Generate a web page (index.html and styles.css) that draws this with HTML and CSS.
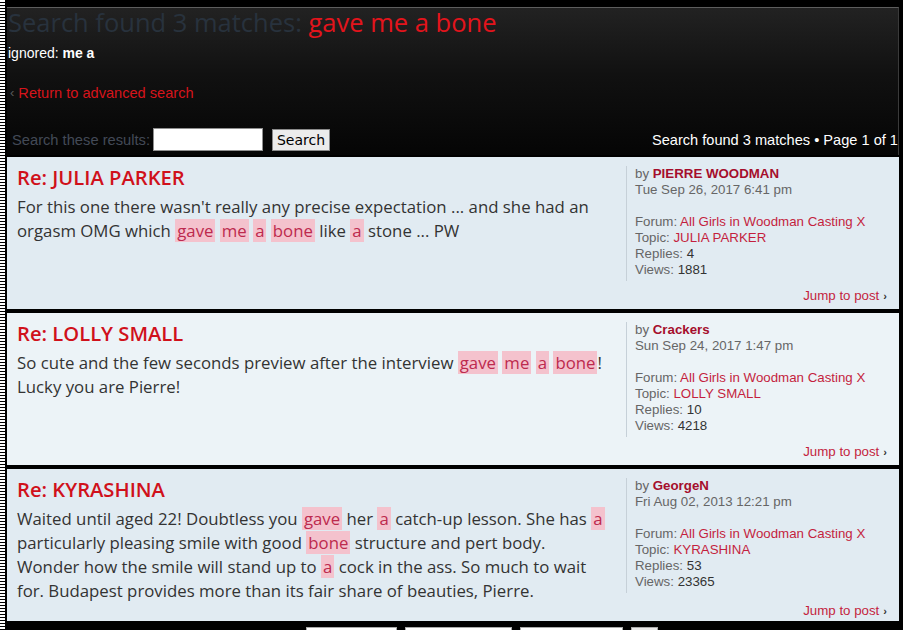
FILE: index.html
```html
<!DOCTYPE html>
<html lang="en">
<head>
<meta charset="utf-8">
<title>Search results</title>
<link rel="stylesheet" href="styles.css">
</head>
<body>
<div class="page">
  <div class="edge"></div>
  <div class="wrap">
    <header class="head">
      <h2 class="title">Search found 3 matches: <span class="kw">gave me a bone</span></h2>
      <p class="ignored">ignored: <strong>me a</strong></p>
      <p class="back"><span class="arrow">‹</span><a class="backlink">Return to advanced search</a></p>
      <div class="searchbar">
        <form class="sform">
          <label class="slabel">Search these results:</label>
          <input class="sinput" type="text">
          <button class="sbtn" type="button">Search</button>
        </form>
        <div class="pag">Search found 3 matches • Page 1 of 1</div>
      </div>
    </header>

    <article class="card bg2">
      <div class="main">
        <div class="post">
          <h3 class="ptitle">Re: JULIA PARKER</h3>
          <div class="content">For this one there wasn't really any precise expectation ... and she had an orgasm OMG which <span class="hl">gave</span> <span class="hl">me</span> <span class="hl">a</span> <span class="hl">bone</span> like <span class="hl">a</span> stone ... PW</div>
        </div>
        <dl class="profile">
          <dt>by <a class="author">PIERRE WOODMAN</a></dt>
          <dd>Tue Sep 26, 2017 6:41 pm</dd>
          <dd class="gap">Forum: <a class="lnk">All Girls in Woodman Casting X</a></dd>
          <dd>Topic: <a class="lnk">JULIA PARKER</a></dd>
          <dd>Replies: <strong class="val">4</strong></dd>
          <dd>Views: <strong class="val">1881</strong></dd>
        </dl>
      </div>
      <div class="jump"><a class="lnk">Jump to post</a><span class="chev">›</span></div>
    </article>

    <article class="card bg1">
      <div class="main">
        <div class="post">
          <h3 class="ptitle">Re: LOLLY SMALL</h3>
          <div class="content">So cute and the few seconds preview after the interview <span class="hl">gave</span> <span class="hl">me</span> <span class="hl">a</span> <span class="hl">bone</span>! Lucky you are Pierre!</div>
        </div>
        <dl class="profile">
          <dt>by <a class="author">Crackers</a></dt>
          <dd>Sun Sep 24, 2017 1:47 pm</dd>
          <dd class="gap">Forum: <a class="lnk">All Girls in Woodman Casting X</a></dd>
          <dd>Topic: <a class="lnk">LOLLY SMALL</a></dd>
          <dd>Replies: <strong class="val">10</strong></dd>
          <dd>Views: <strong class="val">4218</strong></dd>
        </dl>
      </div>
      <div class="jump"><a class="lnk">Jump to post</a><span class="chev">›</span></div>
    </article>

    <article class="card bg2">
      <div class="main">
        <div class="post">
          <h3 class="ptitle">Re: KYRASHINA</h3>
          <div class="content">Waited until aged 22! Doubtless you <span class="hl">gave</span> her <span class="hl">a</span> catch-up lesson. She has <span class="hl">a</span> particularly pleasing smile with good <span class="hl">bone</span> structure and pert body. Wonder how the smile will stand up to <span class="hl">a</span> cock in the ass. So much to wait for. Budapest provides more than its fair share of beauties, Pierre.</div>
        </div>
        <dl class="profile">
          <dt>by <a class="author">GeorgeN</a></dt>
          <dd>Fri Aug 02, 2013 12:21 pm</dd>
          <dd class="gap">Forum: <a class="lnk">All Girls in Woodman Casting X</a></dd>
          <dd>Topic: <a class="lnk">KYRASHINA</a></dd>
          <dd>Replies: <strong class="val">53</strong></dd>
          <dd>Views: <strong class="val">23365</strong></dd>
        </dl>
      </div>
      <div class="jump"><a class="lnk">Jump to post</a><span class="chev">›</span></div>
    </article>

    <div class="bottom">
      <span class="box b1"></span>
      <span class="box b2"></span>
      <span class="box b3"></span>
      <span class="box b4"></span>
    </div>
  </div>
</div>
</body>
</html>
```

FILE: styles.css
```css
html, body {
  margin: 0;
  padding: 0;
  background: #000;
  height: 630px;
  overflow: hidden;
}
.page {
  display: flex;
  align-items: stretch;
  min-height: 630px;
}
.edge {
  width: 5px;
  flex: none;
  background: repeating-linear-gradient(to bottom, #fff 0 2px, #000 2px 3px);
  border-right: 2px solid #000;
}
.wrap {
  width: 892px;
  flex: none;
  padding-top: 7px;
}
.head {
  border-top: 1px solid #5e5e5e;
  border-right: 1px solid #3a3a3a;
  background: linear-gradient(to bottom, #222 0%, #111 45%, #050505 100%);
  height: 148px;
  box-sizing: border-box;
  padding: 0 0 0 1px;
  font-family: "Liberation Sans", Arial, sans-serif;
  font-size: 14px;
  color: #fff;
  overflow: hidden;
}
.title {
  margin: -2px 0 0 0;
  font-family: "Open Sans", sans-serif;
  font-weight: 400;
  font-size: 25.5px;
  line-height: 32px;
  color: #28323d;
  white-space: nowrap;
}
.kw {
  color: #e3141c;
}
.ignored {
  margin: 6px 0 0 0;
  line-height: 18px;
}
.back {
  margin: 22px 0 0 2px;
  line-height: 18px;
  font-size: 14.6px;
  display: flex;
  gap: 4px;
}
.arrow {
  color: #5a5a5a;
  font-size: 13px;
}
.backlink {
  color: #d7141b;
}
.searchbar {
  margin-top: 26px;
  display: flex;
  justify-content: space-between;
  align-items: center;
}
.sform {
  margin: 0;
  display: flex;
  align-items: center;
  padding-left: 4px;
}
.slabel {
  color: #434a57;
  font-size: 14.7px;
}
.sinput {
  margin: 0 0 0 3px;
  width: 110px;
  height: 23px;
  box-sizing: border-box;
  border: 1px solid #8f8f8f;
  background: #fff;
  padding: 0;
}
.sbtn {
  margin-left: 9px;
  height: 22px;
  width: 58px;
  box-sizing: border-box;
  padding: 0;
  border: 1px solid #8a8a8a;
  background: #ececec;
  font-family: "DejaVu Sans", sans-serif;
  font-size: 14px;
  color: #000;
}
.pag {
  font-size: 14.6px;
  white-space: nowrap;
}

.card {
  height: 152px;
  box-sizing: border-box;
  margin-top: 4px;
  padding: 0 12px 5px 10px;
  display: flex;
  flex-direction: column;
}
.head + .card {
  margin-top: 2px;
}
.bg2 { background: #e1ebf2; }
.bg1 { background: #ecf3f7; }
.main {
  display: flex;
  align-items: flex-start;
}
.post {
  flex: 1;
  min-width: 0;
  padding-right: 16px;
}
.ptitle {
  margin: 8px 0 0 0;
  font-family: "Open Sans", sans-serif;
  font-weight: 600;
  font-size: 20.2px;
  line-height: 24px;
  color: #d0111b;
}
.content {
  margin-top: 6px;
  font-family: "Open Sans", sans-serif;
  font-size: 16.8px;
  line-height: 24px;
  color: #333;
}
.hl {
  background: #f4c2cd;
  color: #bd2a4e;
  padding: 0 2px;
}
.profile {
  width: 252px;
  flex: none;
  margin: 9px 0 0 0;
  padding: 0 0 3px 8px;
  border-left: 1px solid #c6d0d8;
  font-family: "Liberation Sans", Arial, sans-serif;
  font-size: 13.3px;
  line-height: 16px;
  color: #666;
  white-space: nowrap;
}
.profile dt, .profile dd {
  margin: 0;
}
.profile .gap {
  margin-top: 16px;
}
.author {
  color: #a50e2c;
  font-weight: bold;
}
.lnk {
  color: #c41f3e;
}
.val {
  font-weight: normal;
  color: #333;
}
.jump {
  margin-top: auto;
  align-self: flex-end;
  font-family: "Liberation Sans", Arial, sans-serif;
  font-size: 13.3px;
  line-height: 16px;
  display: flex;
  align-items: center;
  gap: 4px;
}
.chev {
  color: #333;
  font-weight: bold;
  font-size: 11px;
}
.bottom {
  display: flex;
  margin-top: 6px;
  padding-left: 299px;
  gap: 8px;
}
.box {
  height: 22px;
  box-sizing: border-box;
  background: #fff;
  border: 1px solid #a9a9a9;
}
.b1 { width: 91px; }
.b2 { width: 107px; }
.b3 { width: 103px; }
.b4 { width: 27px; background: #e9e9e9; }
```
